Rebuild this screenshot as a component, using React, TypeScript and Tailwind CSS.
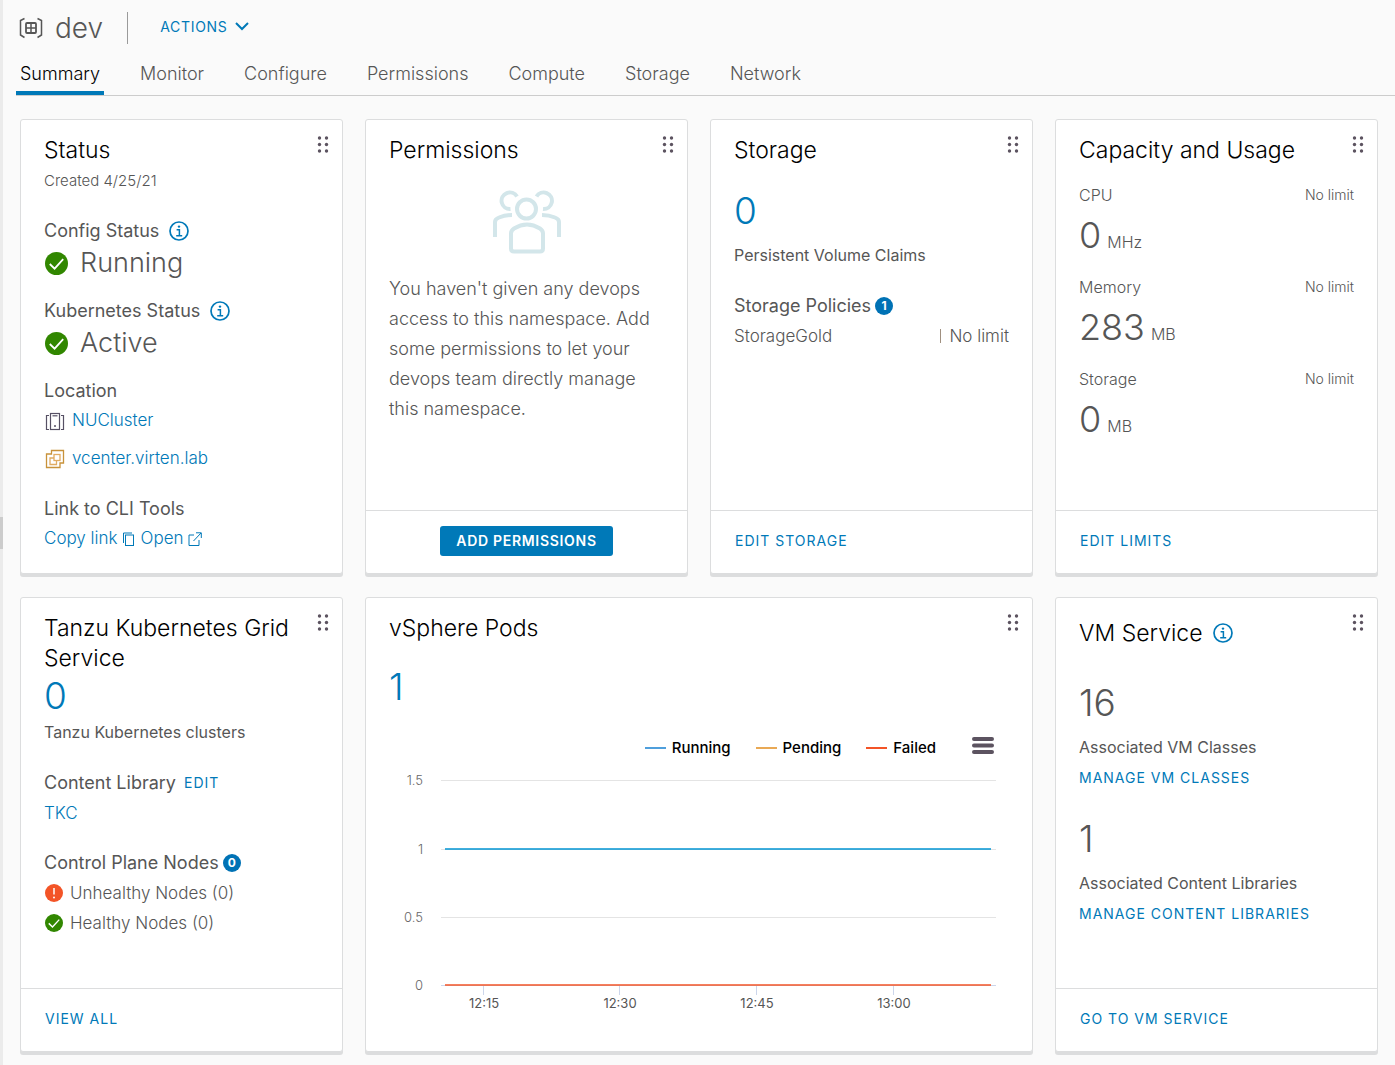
import type { ReactNode } from "react";

function DragHandle() {
  return (
    <button type="button" aria-label="Drag card" className="absolute top-[15px] right-3 p-px text-[#5c5360]">
      <svg width="12" height="18" viewBox="0 0 12 18" fill="currentColor">
        {[2, 8.5, 15].map((y) => (
          <g key={y}>
            <circle cx="2.5" cy={y} r="1.7" />
            <circle cx="9.5" cy={y} r="1.7" />
          </g>
        ))}
      </svg>
    </button>
  );
}

function InfoIcon() {
  return (
    <svg width="20" height="20" viewBox="0 0 20 20" fill="none" stroke="#0079b8" className="shrink-0">
      <circle cx="10" cy="10" r="9" strokeWidth="1.7" />
      <path d="M7.6 8.7h2.8v6M7.2 14.8h6" strokeWidth="1.5" />
      <circle cx="10" cy="5.6" r="1.2" fill="#0079b8" stroke="none" />
    </svg>
  );
}

function CheckIcon({ size }: { size: number }) {
  return (
    <svg width={size} height={size} viewBox="0 0 24 24" className="shrink-0">
      <circle cx="12" cy="12" r="12" fill="#318700" />
      <path d="M5 12.5l5 4.8 9-9.8" fill="none" stroke="#fff" strokeWidth="1.9" />
    </svg>
  );
}

function ErrorIcon() {
  return (
    <svg width="18" height="18" viewBox="0 0 18 18" className="shrink-0">
      <circle cx="9" cy="9" r="9" fill="#f35427" />
      <path d="M9 4v6.5" stroke="#fff" strokeWidth="1.5" />
      <circle cx="9" cy="13.5" r="1" fill="#fff" />
    </svg>
  );
}

function NamespaceIcon() {
  return (
    <svg width="24" height="22" viewBox="0 0 24 22" fill="none" stroke="#565656" strokeWidth="1.5">
      <path d="M5.5 1.5L1.5 3.5v14.5l4 2.5M18.5 1.5l4 2v14.5l-4 2.5" />
      <rect x="7" y="6" width="10" height="10" rx="1" strokeWidth="1.8" />
      <path d="M12 6v10M7 11h10" />
    </svg>
  );
}

function ClusterIcon() {
  return (
    <svg width="20" height="20" viewBox="0 0 20 20" fill="none" stroke="#565064" strokeWidth="1.2">
      <path d="M4 4.5H1.5V18.5H4M16 4.5h2.5V18.5H16" />
      <rect x="5.5" y="2.5" width="9" height="16" />
      <path d="M7.5 4.8h5" />
      <circle cx="10" cy="15" r="1" fill="#565064" stroke="none" />
    </svg>
  );
}

function VcenterIcon() {
  return (
    <svg width="20" height="20" viewBox="0 0 20 20" fill="none" stroke="#c8923a" strokeWidth="1.3">
      <path d="M6.5 5V1.5h12V14H15v4.5H1.5V5z" />
      <rect x="9" y="5.5" width="6" height="6" stroke="#e0ab62" />
      <path d="M9 9H5v6.5h6.5v-4" stroke="#e0ab62" />
    </svg>
  );
}

function CopyIcon() {
  return (
    <svg width="13" height="14" viewBox="0 0 13 14" fill="none" stroke="#0079b8">
      <path d="M1.5 11V1H10" />
      <rect x="3.5" y="3" width="8" height="10.5" />
    </svg>
  );
}

function OpenIcon() {
  return (
    <svg width="14" height="14" viewBox="0 0 14 14" fill="none" stroke="#0079b8">
      <path d="M6 3H1v10.5h10V8M5.5 9L13 1M8 .8h5.3V6" />
    </svg>
  );
}

function PeopleIcon() {
  return (
    <svg width="70" height="64" viewBox="0 0 70 64" fill="none" stroke="#d3e6ea" strokeWidth="4">
      <circle cx="34.5" cy="19" r="9.5" />
      <path d="M19 43.5q0-3 3-5 13-8 26 0 3 2 3 5v15q0 3-3 3H22q-3 0-3-3z" />
      <path d="M25 6.5A8.3 8.3 0 1 0 18.5 19M44.5 6.5A8.3 8.3 0 1 1 51 19" />
      <path d="M3 47V32q0-3 4-4.5 6-2.5 13-2.5M67 47V32q0-3-4-4.5-6-2.5-13-2.5" />
    </svg>
  );
}

function Card({
  title,
  children,
  footer,
  wide,
  extra,
}: {
  title: string;
  children: ReactNode;
  footer?: ReactNode;
  wide?: boolean;
  extra?: ReactNode;
}) {
  return (
    <article
      className={`relative flex min-h-[455px] flex-col rounded-[3px] border border-[#dcddde] bg-white shadow-[0_3px_0_#dcddde] ${
        wide ? "col-span-2" : ""
      }`}
    >
      <DragHandle />
      <div className={`flex-1 px-[23px] ${extra ? "pt-5" : "pt-[15px]"}`}>
        <h2 className="flex items-center gap-[10px] pr-6 text-[23px] leading-[30px] font-light text-black">
          {title}
          {extra}
        </h2>
        {children}
      </div>
      {footer && (
        <div className="flex h-[63px] items-center border-t border-[#dcddde] px-6 pb-[2px]">{footer}</div>
      )}
    </article>
  );
}

function ActionLink({ children }: { children: ReactNode }) {
  return (
    <a href="#" className="text-[14px] leading-6 tracking-[1px] text-[#0079b8] uppercase">
      {children}
    </a>
  );
}

function Heading({ children }: { children: ReactNode }) {
  return <h3 className="flex h-6 items-center text-[18px] leading-6">{children}</h3>;
}

function Badge({ children }: { children: ReactNode }) {
  return (
    <span className="ml-1 flex size-[18px] items-center justify-center rounded-full bg-[#0072b5] text-[12px] font-bold text-white">
      {children}
    </span>
  );
}

const tabs = ["Summary", "Monitor", "Configure", "Permissions", "Compute", "Storage", "Network"];

const usage = [
  { label: "CPU", value: "0", unit: "MHz" },
  { label: "Memory", value: "283", unit: "MB" },
  { label: "Storage", value: "0", unit: "MB" },
];

const series = [
  { name: "Running", line: "bg-[#4f9fdc]" },
  { name: "Pending", line: "bg-[#e9a955]" },
  { name: "Failed", line: "bg-[#f35427]" },
];

const yTicks = [
  { label: "1.5", y: 20 },
  { label: "1", y: 89 },
  { label: "0.5", y: 157 },
  { label: "0", y: 225 },
];

const xTicks = [
  { label: "12:15", x: 94 },
  { label: "12:30", x: 230 },
  { label: "12:45", x: 367 },
  { label: "13:00", x: 504 },
];

function PodsChart() {
  return (
    <svg viewBox="0 0 620 256" className="block w-full" role="img" aria-label="vSphere Pods over time">
      {yTicks.map((t) => (
        <g key={t.label}>
          <path d={`M52 ${t.y}.5H607`} stroke={t.label === "0" ? "#ccd6eb" : "#e4e4e4"} />
          <text x="34" y={t.y + 5} textAnchor="end" fontSize="13" fontWeight="300" fill="#666">
            {t.label}
          </text>
        </g>
      ))}
      {xTicks.map((t) => (
        <g key={t.label}>
          <path d={`M${t.x}.5 225v10`} stroke="#ccd6eb" />
          <text x={t.x + 1} y="248" textAnchor="middle" fontSize="13" fill="#565656">
            {t.label}
          </text>
        </g>
      ))}
      <path d="M56 89H602" stroke="#0095d3" strokeWidth="1.6" />
      <path d="M56 225H602" stroke="#f35427" strokeWidth="1.6" />
    </svg>
  );
}

export default function App() {
  return (
    <div className="flex min-h-screen bg-[#fafafa] font-['Inter','Liberation_Sans',sans-serif] text-[#565656]">
      <div className="flex w-[3px] shrink-0 items-center bg-[#ebebeb]">
        <div className="h-8 w-full bg-[#ccc]" />
      </div>
      <div className="min-w-0 flex-1 pb-[10px]">
        <header className="flex h-[56px] items-center pl-4">
          <NamespaceIcon />
          <h1 className="ml-3 text-[28px] leading-8 font-light">dev</h1>
          <div className="ml-6 h-8 border-l border-[#9a9a9a]" />
          <button
            type="button"
            className="ml-8 flex items-center gap-2 pb-[3px] text-[14px] tracking-wider text-[#0079b8]"
          >
            ACTIONS
            <svg width="14" height="9" viewBox="0 0 14 9" fill="none" stroke="currentColor" strokeWidth="2">
              <path d="M1 1l6 6 6-6" />
            </svg>
          </button>
        </header>
        <nav className="ml-[13px] flex h-10 gap-8 border-b border-[#ccc]">
          {tabs.map((tab, i) => (
            <a
              key={tab}
              href="#"
              aria-current={i === 0 ? "page" : undefined}
              className={`flex h-[39px] items-center px-1 pb-1 text-[18px] font-light ${
                i === 0 ? "text-black shadow-[inset_0_-4px_0_#0079b8]" : ""
              }`}
            >
              {tab}
            </a>
          ))}
        </nav>

        <main className="mt-[23px] mr-[17px] ml-[17px] grid grid-cols-4 gap-x-[22px] gap-y-[23px]">
          <Card title="Status">
            <p className="mt-1 text-[15px] leading-6 font-light">Created 4/25/21</p>
            <div className="mt-[26px] flex items-center gap-[10px]">
              <Heading>Config Status</Heading>
              <InfoIcon />
            </div>
            <p className="flex h-10 items-center gap-3 pl-px text-[27px] font-light">
              <CheckIcon size={23} />
              Running
            </p>
            <div className="mt-4 flex items-center gap-[10px]">
              <Heading>Kubernetes Status</Heading>
              <InfoIcon />
            </div>
            <p className="flex h-10 items-center gap-3 pl-px text-[27px] font-light">
              <CheckIcon size={23} />
              Active
            </p>
            <div className="mt-4">
              <Heading>Location</Heading>
            </div>
            <div className="mt-[6px] flex h-6 items-center gap-[7px] pl-px">
              <ClusterIcon />
              <a href="#" className="text-[17px] font-light text-[#0079b8]">NUCluster</a>
            </div>
            <div className="mt-[14px] flex h-6 items-center gap-[7px] pl-px">
              <VcenterIcon />
              <a href="#" className="text-[17px] font-light text-[#0079b8]">vcenter.virten.lab</a>
            </div>
            <div className="mt-[26px]">
              <Heading>Link to CLI Tools</Heading>
            </div>
            <div className="mt-[6px] flex h-6 items-center gap-[6px] text-[17px] font-light text-[#0079b8]">
              <a href="#" className="flex items-center gap-1">Copy link <CopyIcon /></a>
              <a href="#" className="flex items-center gap-1">Open <OpenIcon /></a>
            </div>
          </Card>

          <Card
            title="Permissions"
            footer={
              <button
                type="button"
                className="mx-auto h-[30px] rounded-[3px] bg-[#0079b8] px-4 pb-[2px] text-[14px] font-semibold tracking-wider text-white"
              >
                ADD PERMISSIONS
              </button>
            }
          >
            <div className="mt-[25px] flex justify-center">
              <PeopleIcon />
            </div>
            <p className="mt-5 text-[18px] leading-[30px] font-light">
              You haven't given any devops access to this namespace. Add some permissions to let your devops team
              directly manage this namespace.
            </p>
          </Card>

          <Card title="Storage" footer={<ActionLink>Edit storage</ActionLink>}>
            <p className="mt-[26px] text-[37px] leading-10 font-light text-[#0079b8]">0</p>
            <p className="mt-3 text-[16px] leading-6">Persistent Volume Claims</p>
            <div className="mt-[27px]">
              <Heading>
                Storage Policies <Badge>1</Badge>
              </Heading>
            </div>
            <div className="mt-[6px] flex justify-between text-[17px] leading-6 font-light">
              <span>StorageGold</span>
              <span className="flex items-center gap-2">
                <span className="h-[14px] border-l border-[#a09080]" />
                No limit
              </span>
            </div>
          </Card>

          <Card title="Capacity and Usage" footer={<ActionLink>Edit limits</ActionLink>}>
            <dl className="mt-[18px] flex flex-col gap-5">
              {usage.map((u) => (
                <div key={u.label}>
                  <dt className="flex justify-between text-[16px] leading-6 font-light">
                    {u.label}
                    <span className="text-[14px]">No limit</span>
                  </dt>
                  <dd className="mt-2 flex items-baseline gap-[6px] text-[36px] leading-10 font-light">
                    {u.value}
                    <span className="text-[16px] leading-4">{u.unit}</span>
                  </dd>
                </div>
              ))}
            </dl>
          </Card>

          <Card title="Tanzu Kubernetes Grid Service" footer={<ActionLink>View all</ActionLink>}>
            <p className="mt-[3px] text-[37px] leading-10 font-light text-[#0079b8]">0</p>
            <p className="mt-1 text-[16px] leading-6">Tanzu Kubernetes clusters</p>
            <div className="mt-[27px] flex items-center gap-2">
              <Heading>Content Library</Heading>
              <ActionLink>Edit</ActionLink>
            </div>
            <a href="#" className="mt-[6px] block text-[17px] leading-6 font-light text-[#0079b8]">TKC</a>
            <div className="mt-[26px]">
              <Heading>
                Control Plane Nodes <Badge>0</Badge>
              </Heading>
            </div>
            <p className="mt-[6px] flex items-center gap-[7px] pl-px text-[17px] leading-6 font-light">
              <ErrorIcon />
              Unhealthy Nodes (0)
            </p>
            <p className="mt-[6px] flex items-center gap-[7px] pl-px text-[17px] leading-6 font-light">
              <CheckIcon size={18} />
              Healthy Nodes (0)
            </p>
          </Card>

          <Card title="vSphere Pods" wide>
            <p className="mt-6 text-[37px] leading-10 font-light text-[#0079b8]">1</p>
            <div className="mt-[29px] flex h-6 items-center justify-end gap-[25px] pr-[15px] text-[15px] font-medium text-black">
              {series.map((s) => (
                <span key={s.name} className="flex items-center gap-[6px]">
                  <span className={`h-[2px] w-[21px] ${s.line}`} />
                  {s.name}
                </span>
              ))}
              <button type="button" aria-label="Chart menu" className="ml-[11px] pb-[6px] text-[#5c5360]">
                <svg width="22" height="17" viewBox="0 0 22 17" stroke="currentColor" strokeWidth="4" strokeLinecap="round">
                  <path d="M2 2h18M2 8.5h18M2 15h18" />
                </svg>
              </button>
            </div>
            <PodsChart />
          </Card>

          <Card title="VM Service" extra={<InfoIcon />} footer={<ActionLink>Go to VM service</ActionLink>}>
            <p className="mt-[35px] text-[37px] leading-10 font-light">16</p>
            <p className="mt-3 text-[16px] leading-6">Associated VM Classes</p>
            <div className="mt-[7px] flex">
              <ActionLink>Manage VM classes</ActionLink>
            </div>
            <p className="mt-[29px] text-[37px] leading-10 font-light">1</p>
            <p className="mt-3 text-[16px] leading-6">Associated Content Libraries</p>
            <div className="mt-[7px] flex">
              <ActionLink>Manage content libraries</ActionLink>
            </div>
          </Card>
        </main>
      </div>
    </div>
  );
}
